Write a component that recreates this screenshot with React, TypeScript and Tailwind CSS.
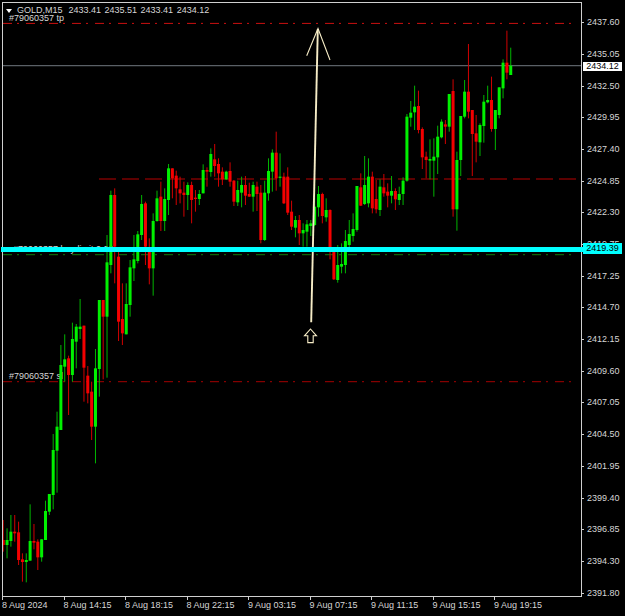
const BODY_G = "#00f000";
const BODY_R = "#f50000";
const WICK_G = "#00b400";
const WICK_R = "#d00000";

// [index, g/r, bodyTop, bodyBottom, wickTop, wickBottom] in 3x units, relative to base
type Row = [number, 0 | 1, number, number, number, number];
const group = (base: number, rows: Row[]) => rows.map(([i, red, a, b, c, d]) => ({ i, red, a: (base + a) / 3, b: (base + b) / 3, c: (base + c) / 3, d: (base + d) / 3 }));

const candles = [
  ...group(1230, [
    [0, 1, 390, 405, 330, 425], [1, 0, 390, 405, 355, 445], [2, 0, 365, 393, 315, 410], [3, 1, 365, 370, 315, 395],
    [4, 1, 367, 450, 335, 465], [5, 1, 448, 456, 430, 515], [6, 0, 450, 456, 430, 517], [7, 0, 393, 452, 283, 452],
    [8, 1, 393, 398, 342, 418], [9, 1, 395, 442, 388, 480], [10, 0, 388, 442, 388, 455], [11, 0, 303, 390, 272, 390],
    [12, 0, 252, 305, 252, 315], [13, 0, 120, 255, 72, 298], [14, 0, 50, 122, 5, 248],
  ]),
  ...group(615, [
    [15, 0, 480, 675, 420, 675], [16, 0, 463, 485, 388, 530], [17, 1, 460, 510, 452, 630], [18, 0, 402, 510, 353, 530],
    [19, 0, 365, 410, 357, 490], [20, 0, 365, 372, 282, 402], [21, 1, 362, 488, 362, 590], [22, 1, 512, 565, 483, 595],
    [23, 1, 560, 665, 530, 705], [24, 0, 490, 665, 432, 775], [25, 0, 285, 492, 285, 575], [26, 1, 285, 335, 285, 523],
    [27, 0, 172, 335, 90, 518], [28, 0, -30, 180, -43, 205], [29, 1, -30, 125, -50, 235], [30, 1, 155, 350, 140, 408],
    [31, 1, 342, 385, 235, 420], [32, 0, 297, 388, 235, 388], [33, 0, 187, 300, 165, 335], [34, 0, 163, 190, 90, 228],
    [35, 0, 88, 168, 78, 175], [36, 0, -3, 90, -30, 105], [37, 1, -5, 125, -10, 180], [38, 1, 140, 190, 100, 238],
    [39, 0, 48, 190, 25, 272], [40, 0, -20, 48, -43, 50], [41, 1, -25, 48, -70, 78], [42, 0, -18, 48, -50, 78],
    [43, 0, -110, -15, -123, 30], [44, 1, -110, -80, -110, -20], [45, 1, -88, -50, -103, 0], [46, 1, -47, -35, -85, -5],
    [47, 1, -37, -30, -70, 35], [48, 0, -60, -30, -68, 15], [49, 1, -60, -15, -70, 55], [50, 1, -22, -18, -45, 20],
    [51, 0, -33, -18, -45, 0],
  ]),
  ...group(390, [
    [52, 0, 120, 190, 103, 190], [53, 1, 120, 125, 112, 170], [54, 0, 72, 126, 55, 140], [55, 1, 88, 108, 42, 140],
    [56, 1, 102, 130, 85, 170], [57, 1, 125, 148, 112, 165], [58, 0, 125, 148, 122, 150], [59, 1, 123, 155, 97, 170],
    [60, 1, 152, 215, 150, 228], [61, 0, 180, 217, 152, 228], [62, 0, 165, 188, 140, 232], [63, 1, 165, 197, 138, 225],
    [64, 1, 192, 200, 158, 200], [65, 0, 165, 200, 155, 245], [66, 1, 170, 192, 155, 243], [67, 1, 188, 330, 165, 340],
    [68, 0, 188, 330, 152, 333], [69, 0, 123, 190, 85, 212], [70, 0, 68, 125, 58, 185], [71, 1, 68, 145, 5, 182],
    [72, 0, 140, 143, 70, 170], [73, 1, 140, 220, 128, 222], [74, 1, 140, 248, 112, 255], [75, 1, 245, 290, 212, 300],
    [76, 0, 270, 293, 258, 322], [77, 1, 270, 310, 255, 345], [78, 0, 300, 310, 280, 350], [79, 0, 283, 305, 270, 350],
    [80, 0, 280, 288, 270, 318], [81, 0, 230, 285, 145, 288], [82, 0, 192, 232, 168, 260], [83, 1, 192, 258, 188, 280],
    [84, 0, 240, 262, 205, 275], [85, 1, 240, 365, 238, 388], [86, 1, 365, 448, 360, 450], [87, 0, 405, 450, 345, 458],
    [88, 0, 402, 410, 340, 430], [89, 0, 333, 405, 300, 430], [90, 0, 312, 345, 270, 360], [91, 0, 297, 318, 250, 335],
    [92, 0, 168, 300, 168, 305], [93, 1, 172, 227, 130, 228], [94, 0, 165, 222, 78, 225], [95, 0, 140, 220, 85, 232],
    [96, 1, 140, 235, 125, 250], [97, 1, 207, 238, 150, 250], [98, 0, 170, 240, 148, 258], [99, 1, 172, 190, 132, 200],
    [100, 1, 185, 197, 160, 232],
  ]),
  ...group(60, [
    [101, 0, 513, 527, 468, 550], [102, 1, 513, 538, 505, 570], [103, 0, 522, 540, 500, 555], [104, 0, 482, 522, 472, 555],
    [105, 0, 290, 482, 282, 485], [106, 0, 278, 293, 243, 320], [107, 0, 260, 277, 197, 330], [108, 1, 258, 330, 212, 340],
    [109, 1, 327, 412, 322, 447], [110, 1, 410, 420, 395, 475], [111, 0, 417, 422, 358, 478], [112, 0, 410, 422, 355, 530],
    [113, 0, 350, 412, 317, 462], [114, 0, 305, 352, 298, 355], [115, 1, 313, 320, 300, 372], [116, 0, 222, 320, 222, 335],
    [117, 1, 213, 568, 178, 590], [118, 0, 420, 568, 395, 632], [119, 0, 288, 420, 288, 468], [120, 0, 215, 290, 180, 295],
    [121, 1, 215, 275, 72, 295], [122, 1, 270, 342, 270, 468], [123, 1, 340, 365, 285, 427], [124, 0, 315, 367, 310, 408],
    [125, 0, 245, 318, 225, 368], [126, 0, 240, 247, 197, 250], [127, 1, 240, 327, 170, 335], [128, 0, 270, 327, 270, 390],
    [129, 0, 202, 285, 202, 295], [130, 0, 128, 205, 118, 235], [131, 1, 128, 158, 32, 178], [132, 0, 137, 165, 83, 165],
  ]),
];

const prices = ["2437.60", "2435.05", "2432.50", "2429.95", "2427.40", "2424.85", "2422.30", "2419.75", "2417.25", "2414.70", "2412.15", "2409.60", "2407.05", "2404.50", "2401.95", "2399.40", "2396.85", "2394.30", "2391.80"];
const times = ["8 Aug 2024", "8 Aug 14:15", "8 Aug 18:15", "8 Aug 22:15", "9 Aug 03:15", "9 Aug 07:15", "9 Aug 11:15", "9 Aug 15:15", "9 Aug 19:15"];
const cream = "#f6ecc6";

export default function App() {
  return (
    <div className="relative flex h-[616px] w-[625px] items-start overflow-hidden bg-black text-[9px] leading-none text-[#d6d6d6] [font-family:'Liberation_Sans',Arial,sans-serif]">
      <div className="flex w-[580px] shrink-0 flex-col ml-[2px] mt-[2px]">
        <div className="relative h-[595px] w-[580px] border border-[#cfcfcf]">
          <div className="absolute left-[14px] top-[3px] flex h-[8px] gap-[3.5px] whitespace-nowrap leading-[8px]">
            <span className="w-[48px]">GOLD,M15</span>
            <span>2433.41</span>
            <span>2435.51</span>
            <span>2433.41</span>
            <span>2434.12</span>
          </div>
          <div className="absolute left-[3px] top-[6px] h-0 w-0 border-x-[3.5px] border-t-[4px] border-x-transparent border-t-white" />
          <span className="absolute left-[6px] top-[11px] h-[8px] whitespace-nowrap leading-[8px]">#79060357 tp</span>
          <span className="absolute left-[10px] top-[241.5px] whitespace-nowrap">#79060357 buy limit 0.00</span>
          <span className="absolute left-[6px] top-[369px] whitespace-nowrap">#79060357 sl</span>
          <svg className="relative block h-[593px] w-[578px]" viewBox="3 3 578 593">
            <line x1="3" x2="581" y1="65.6" y2="65.6" stroke="#5a6066" strokeWidth="1.3" />
            <line x1="3" x2="578" y1="23.4" y2="23.4" stroke="#cc1010" strokeWidth="1" strokeDasharray="9 5 2 7" />
            <line x1="99" x2="578" y1="179" y2="179" stroke="#b80000" strokeWidth="1" strokeDasharray="17 6" />
            <line x1="3" x2="578" y1="254.7" y2="254.7" stroke="#0b7d0b" strokeWidth="1" strokeDasharray="9 5 2 7" />
            <line x1="3" x2="578" y1="381.7" y2="381.7" stroke="#a40000" strokeWidth="1" strokeDasharray="9 5 2 7" />
            {candles.map((k) => {
              const x = 3.2 + 3.845 * k.i;
              return (
                <g key={k.i}>
                  <rect x={x - 0.5} y={k.c} width="1" height={k.d - k.c} fill={k.red ? WICK_R : WICK_G} />
                  <rect x={x - 1.5} y={k.a} width="3" height={Math.max(k.b - k.a, 1.2)} fill={k.red ? BODY_R : BODY_G} />
                </g>
              );
            })}
            <g fill="none" stroke={cream} strokeWidth="1.1">
              <path d="M311.2 322.3L317.8 29" strokeWidth="1.9" />
              <path d="M306.7 55.7L318 28.5L330 60" />
              <path d="M310.5 329L316.5 335.8H313.2V342.6H307.8V335.8H304.5Z" />
            </g>
          </svg>
        </div>
        <div className="flex">
          {times.map((t) => (
            <div key={t} className="flex w-[61.5px] shrink-0 flex-col items-start">
              <div className="h-[3px] w-px bg-[#cfcfcf]" />
              <span className="mt-[1px] whitespace-nowrap">{t}</span>
            </div>
          ))}
        </div>
      </div>
      <div className="mt-[6.85px] flex flex-col">
        {prices.map((p) => (
          <div key={p} className="flex h-[31.7px] items-center">
            <div className="h-px w-[3px] -ml-px bg-[#cfcfcf]" />
            <span className="ml-[3px]">{p}</span>
          </div>
        ))}
      </div>
      <div className="absolute left-[583px] top-[61.5px] flex h-[9.5px] w-[39px] items-center justify-center bg-white text-black">2434.12</div>
      <div className="absolute left-[1px] top-[247.2px] h-[4.5px] w-[582px] bg-[#00ffff]" />
      <div className="absolute left-[583px] top-[243px] flex h-[10.5px] w-[39px] items-center justify-center bg-[#00ffff] text-black">2419.39</div>
    </div>
  );
}
